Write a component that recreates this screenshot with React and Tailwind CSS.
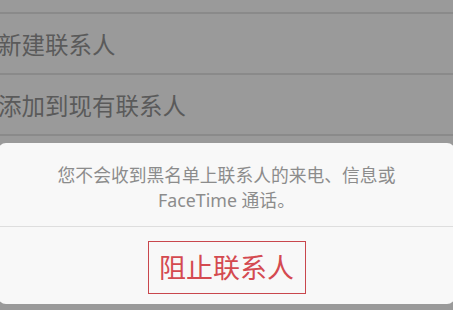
import React from 'react';

const ROWS = ['新建联系人', '添加到现有联系人'];

export default function App() {
  return (
    <div
      className="w-[453px] h-[310px] overflow-hidden bg-[#9a9a9a] flex flex-col"
      style={{ fontFamily: '"Noto Sans", "Noto Sans CJK SC", sans-serif' }}
    >
      {/* 背景列表 */}
      <div className="h-[14px] shrink-0 border-b-2 border-[#8a8a8a]" />
      {ROWS.map((label) => (
        <div
          key={label}
          className="h-[61px] shrink-0 flex items-center pt-[4px] border-b-2 border-[#8a8a8a]"
        >
          <span className="ml-[-2px] text-[23.5px] leading-none text-[#5a5a5a]">{label}</span>
        </div>
      ))}

      {/* 弹出面板 */}
      <div className="mt-[7px] mx-[-2px] h-[161px] shrink-0 rounded-[8px] bg-[#f8f8f8] flex flex-col">
        <div className="h-[83px] flex flex-col items-center justify-center pt-[6px] text-[17.8px] leading-[25px] text-[#8c8c8c] text-center">
          <p>您不会收到黑名单上联系人的来电、信息或</p>
          <p>FaceTime 通话。</p>
        </div>
        <div className="h-px bg-[#dedede]" />
        <div className="flex-1 flex items-center justify-center pt-[3px]">
          <button className="w-[158px] h-[53px] border border-[#c9474d] flex items-center justify-center text-[27px] leading-none text-[#d44a50]">
            阻止联系人
          </button>
        </div>
      </div>
    </div>
  );
}
